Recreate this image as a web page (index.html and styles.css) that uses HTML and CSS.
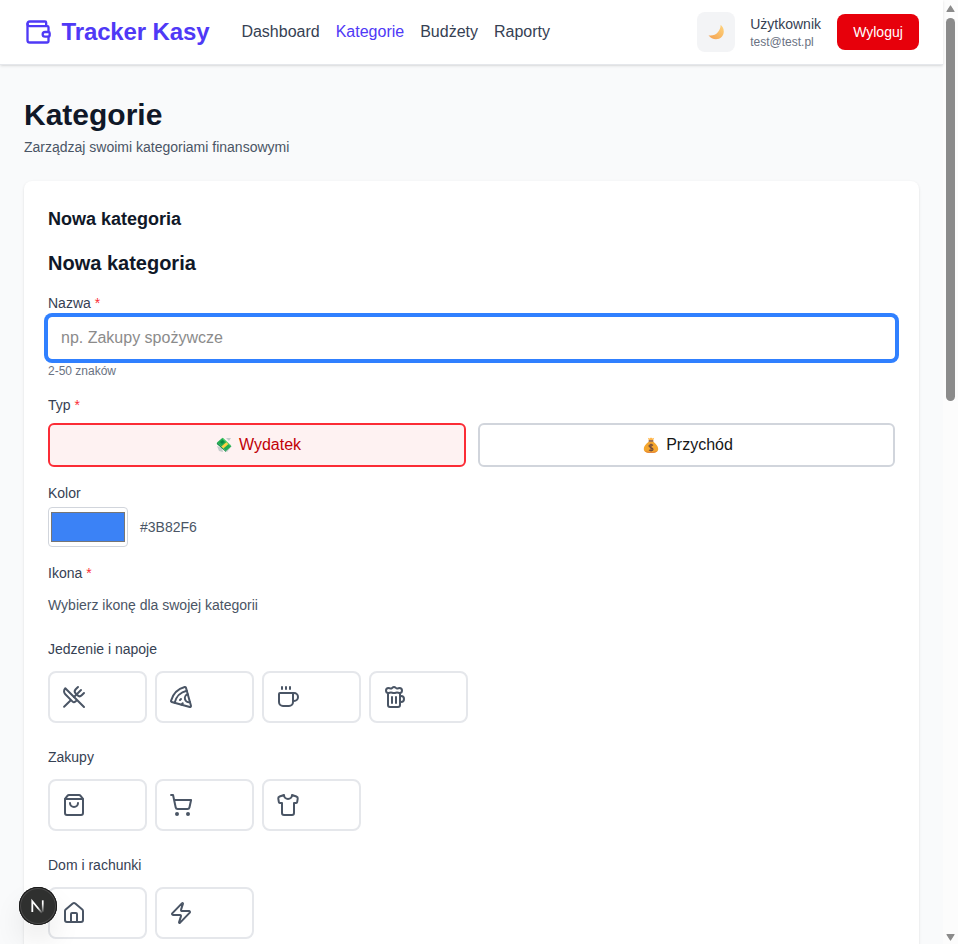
FILE: index.html
```html
<!DOCTYPE html>
<html lang="pl">
<head>
<meta charset="utf-8">
<title>Tracker Kasy</title>
<link rel="stylesheet" href="styles.css">
</head>
<body>
<div class="viewport">
  <div class="page">
    <header class="topbar">
      <div class="brand">
        <svg class="brand-icon" viewBox="0 0 24 24"><path d="M19 7V4a1 1 0 0 0-1-1H5a2 2 0 0 0 0 4h15a1 1 0 0 1 1 1v4h-3a2 2 0 0 0 0 4h3a1 1 0 0 0 1-1v-2a1 1 0 0 0-1-1"/><path d="M3 5v14a2 2 0 0 0 2 2h15a1 1 0 0 0 1-1v-4"/></svg>
        <span class="brand-name">Tracker Kasy</span>
      </div>
      <nav class="nav">
        <a>Dashboard</a><a class="active">Kategorie</a><a>Budżety</a><a>Raporty</a>
      </nav>
      <div class="account">
        <button class="theme" aria-label="Motyw">
          <svg viewBox="0 0 16 16" width="16" height="16"><defs><linearGradient id="moon" x1="1" y1="0" x2="0" y2="1"><stop offset="0" stop-color="#ffd47c"/><stop offset="1" stop-color="#f3a050"/></linearGradient></defs><path fill="url(#moon)" d="M12.6 0.8C16.500 3.900 16.800 9.600 13.600 13C10.200 16.400 3.700 15.900 0.500 11.300C4.300 12 7.700 10.700 9.800 8.200C11.600 6 12.800 3.600 12.600.8Z"/></svg>
        </button>
        <div class="user"><div class="user-name">Użytkownik</div><div class="user-mail">test@test.pl</div></div>
        <button class="logout">Wyloguj</button>
      </div>
    </header>
    <main class="main">
      <h1>Kategorie</h1>
      <p class="lead">Zarządzaj swoimi kategoriami finansowymi</p>
      <section class="card">
        <h2>Nowa kategoria</h2>
        <h3>Nowa kategoria</h3>
        <div class="field name-field">
          <label>Nazwa <i>*</i></label>
          <input class="text-input" type="text" placeholder="np. Zakupy spożywcze">
          <p class="hint">2-50 znaków</p>
        </div>
        <div class="field">
          <label>Typ <i>*</i></label>
          <div class="types">
            <button class="type expense">
              <svg viewBox="0 0 16 16" width="16" height="16"><path fill="#c5cbcb" d="M1 9l5 2 1 4-4-1zM10 1l5 0-2 3zM10 11l5-1-4 5-2-1z"/><path fill="#21ad50" d="M1 5.500 6.500.8 15.500 9.200 10 14Z"/><path fill="#098b42" d="m1 5.500 9 8.500v1L.8 7zM4 5l2.500-2 2 2-2.500 2z"/><path fill="#ffcf42" d="m5.300 9.500 5.500-4.700 2 1.900-5.400 4.800z"/><path fill="#60d579" d="m6.300 1.600.8-.6 7.600 7-.7.7z"/></svg>
              <span>Wydatek</span>
            </button>
            <button class="type income">
              <svg viewBox="0 0 16 16" width="16" height="16"><path fill="#ffb64b" d="m4.900.8 1.700.7L8 .4l1.500 1.100 1.700-.7-1.200 3H6z"/><path fill="#f4a62f" d="M6 4.200h4c1.600 2 5.200 4 5.200 7.800 0 3-2.200 3.800-7.200 3.800S.8 15 .8 12C.8 8.200 4.400 6.200 6 4.200Z"/><path fill="#df7634" d="M2 14c3 1.400 9 1.400 12 0-1 1.500-3 1.800-6 1.800S3 15.500 2 14Z"/><path fill="#875d50" d="M5.700 3.200h4.600v1.500H5.700z"/><path fill="none" stroke="#714b3e" stroke-width="1.200" d="M10 8.500C8.500 7.200 6 7.600 6 9.100s4 1.500 4 3.200-2.700 1.800-4 .6M8 6.800v7.700"/></svg>
              <span>Przychód</span>
            </button>
          </div>
        </div>
        <div class="field color-field">
          <label>Kolor</label>
          <div class="color-row"><div class="swatch"><div class="swatch-fill"></div></div><span>#3B82F6</span></div>
        </div>
        <div class="field icon-field">
          <label>Ikona <i>*</i></label>
          <p class="help">Wybierz ikonę dla swojej kategorii</p>
        </div>
        <div class="group">
          <h4>Jedzenie i napoje</h4>
          <div class="icons">
            <button class="tile"><svg viewBox="0 0 24 24"><path d="m16 2-2.300 2.300a3 3 0 0 0 0 4.200l1.800 1.800a3 3 0 0 0 4.200 0L22 8"/><path d="M15 15 3.300 3.300a4.200 4.200 0 0 0 0 6l7.300 7.300c.7.7 2 .7 2.800 0L15 15Zm0 0 7 7"/><path d="m2.100 21.800 6.400-6.300"/><path d="m19 5-7 7"/></svg></button>
            <button class="tile"><svg viewBox="0 0 24 24"><path d="m12 14-1 1"/><path d="m13.750 18.250-1.250 1.420"/><path d="M17.775 5.654a15.680 15.680 0 0 0-12.121 12.120"/><path d="M18.800 9.300a1 1 0 0 0 2.100 7.700"/><path d="M21.964 20.732a1 1 0 0 1-1.232 1.232l-18-5a1 1 0 0 1-.695-1.232A19.680 19.680 0 0 1 15.732 2.037a1 1 0 0 1 1.232.695z"/></svg></button>
            <button class="tile"><svg viewBox="0 0 24 24"><path d="M10 2v2"/><path d="M14 2v2"/><path d="M16 8a1 1 0 0 1 1 1v8a4 4 0 0 1-4 4H7a4 4 0 0 1-4-4V9a1 1 0 0 1 1-1h14a4 4 0 1 1 0 8h-1"/><path d="M6 2v2"/></svg></button>
            <button class="tile"><svg viewBox="0 0 24 24"><path d="M17 11h1a3 3 0 0 1 0 6h-1"/><path d="M9 12v6"/><path d="M13 12v6"/><path d="M14 7.500c-1 0-1.440.5-3 .5s-2-.5-3-.5-1.720.5-2.500.5a2.500 2.500 0 0 1 0-5c.78 0 1.570.5 2.500.5S9.440 2 11 2s2 1.500 3 1.500 1.720-.5 2.500-.5a2.500 2.500 0 0 1 0 5c-.78 0-1.500-.5-2.500-.5Z"/><path d="M5 8v12a2 2 0 0 0 2 2h8a2 2 0 0 0 2-2V8"/></svg></button>
          </div>
        </div>
        <div class="group">
          <h4>Zakupy</h4>
          <div class="icons">
            <button class="tile"><svg viewBox="0 0 24 24"><path d="M16 10a4 4 0 0 1-8 0"/><path d="M3.103 6.034h17.794"/><path d="M3.400 5.467a2 2 0 0 0-.4 1.200V20a2 2 0 0 0 2 2h14a2 2 0 0 0 2-2V6.667a2 2 0 0 0-.4-1.200l-2-2.667A2 2 0 0 0 17 2H7a2 2 0 0 0-1.600.8z"/></svg></button>
            <button class="tile"><svg viewBox="0 0 24 24"><circle cx="8" cy="21" r="1"/><circle cx="19" cy="21" r="1"/><path d="M2.050 2.050h2l2.660 12.420a2 2 0 0 0 2 1.580h9.780a2 2 0 0 0 1.950-1.570l1.650-7.430H5.120"/></svg></button>
            <button class="tile"><svg viewBox="0 0 24 24"><path d="M20.380 3.460 16 2a4 4 0 0 1-8 0L3.620 3.460a2 2 0 0 0-1.340 2.230l.58 3.470a1 1 0 0 0 .99.84H6v10c0 1.100.9 2 2 2h8a2 2 0 0 0 2-2V10h2.150a1 1 0 0 0 .99-.84l.58-3.470a2 2 0 0 0-1.340-2.230z"/></svg></button>
          </div>
        </div>
        <div class="group">
          <h4>Dom i rachunki</h4>
          <div class="icons">
            <button class="tile"><svg viewBox="0 0 24 24"><path d="M15 21v-8a1 1 0 0 0-1-1h-4a1 1 0 0 0-1 1v8"/><path d="M3 10a2 2 0 0 1 .709-1.528l7-6a2 2 0 0 1 2.582 0l7 6A2 2 0 0 1 21 10v9a2 2 0 0 1-2 2H5a2 2 0 0 1-2-2z"/></svg></button>
            <button class="tile"><svg viewBox="0 0 24 24"><path d="M4 14a1 1 0 0 1-.78-1.630l9.900-10.200a.5.5 0 0 1 .86.46l-1.920 6.020A1 1 0 0 0 13 10h7a1 1 0 0 1 .78 1.630l-9.900 10.200a.5.5 0 0 1-.86-.46l1.920-6.020A1 1 0 0 0 11 14z"/></svg></button>
          </div>
        </div>
      </section>
    </main>
  </div>
  <div class="scrollbar">
    <svg width="9" height="8" viewBox="0 0 9 8"><path d="M4.500 1 8 6.500H1Z"/></svg>
    <div class="thumb"></div>
    <svg class="down" width="9" height="8" viewBox="0 0 9 8"><path d="M4.500 7 8 1.500H1Z"/></svg>
  </div>
  <div class="dev-badge">
    <svg width="38" height="38" viewBox="0 0 38 38"><defs><linearGradient id="nd" gradientUnits="userSpaceOnUse" x1="18" y1="18" x2="24" y2="26"><stop offset=".3" stop-color="#fff"/><stop offset="1" stop-color="#fff" stop-opacity="0"/></linearGradient><linearGradient id="nv" x1="0" y1="0" x2="0" y2="1"><stop offset=".3" stop-color="#fff"/><stop offset="1" stop-color="#fff" stop-opacity=".2"/></linearGradient></defs><path d="M13.300 25V14.200L23 26" fill="none" stroke="url(#nd)" stroke-width="1.800"/><rect x="22.900" y="13.300" width="1.700" height="11.500" fill="url(#nv)"/></svg>
  </div>
</div>
</body>
</html>
```
FILE: styles.css
```css
* { box-sizing: border-box; }
body { margin: 0; font-family: "Liberation Sans", Arial, sans-serif; font-size: 16px; line-height: 24px; color: #171717; }
h1, h2, h3, h4, p { margin: 0; }
button { font: inherit; color: inherit; border: 0; padding: 0; background: none; }
.viewport { position: relative; display: flex; height: 944px; overflow: hidden; }
.page { flex: 1; background: #f9fafb; }
.topbar { position: relative; display: flex; align-items: center; height: 65px; padding: 0 24px; background: #fff; border-bottom: 1px solid #e5e7eb; box-shadow: 0 1px 3px rgba(0,0,0,.1), 0 1px 2px -1px rgba(0,0,0,.1); }
.brand { display: flex; align-items: center; gap: 9.5px; color: #4f39f6; }
.brand-icon { width: 28px; height: 28px; fill: none; stroke: currentColor; stroke-width: 2; stroke-linecap: round; stroke-linejoin: round; }
.brand-name { font-size: 24px; line-height: 32px; font-weight: 700; letter-spacing: -.13px; }
.nav { display: flex; gap: 16px; margin-left: 32px; color: #364153; }
.nav .active { color: #4f39f6; }
.account { display: flex; align-items: center; gap: 16px; margin-left: auto; }
.theme { display: flex; align-items: center; justify-content: center; width: 38px; height: 40px; margin-right: -.7px; border-radius: 8px; background: #f3f4f6; }
.user-name { font-size: 14px; line-height: 20px; color: #364153; }
.user-mail { font-size: 12px; line-height: 16px; color: #6a7282; }
.logout { width: 82px; height: 36px; border-radius: 8px; background: #e7000b; color: #fff; font-size: 14px; line-height: 20px; }
.main { padding: 32px 24px 0; }
h1 { font-size: 30px; line-height: 36px; color: #101828; }
.lead { margin-top: 4px; font-size: 14px; line-height: 20px; color: #4a5565; }
.card { margin-top: 24px; height: 900px; padding: 24px; border-radius: 8px; background: #fff; box-shadow: 0 1px 3px rgba(0,0,0,.1), 0 1px 2px -1px rgba(0,0,0,.1); }
h2 { font-size: 18px; line-height: 28px; color: #101828; }
h3 { margin-top: 16px; font-size: 20px; line-height: 28px; color: #101828; }
.field label { display: block; font-size: 14px; line-height: 20px; color: #364153; }
.field label i { font-style: normal; color: #fb2c36; }
.name-field { margin: 16px 0; }
.text-input { display: block; width: 100%; height: 42px; margin-top: 4px; padding: 0 12px; border: 1px solid #fff; border-radius: 4px; outline: 0; box-shadow: 0 0 0 4px #3080ff; font: inherit; background: #fff; }
.text-input::placeholder { color: #8b8b8b; opacity: 1; }
.hint { margin-top: 4px; font-size: 12px; line-height: 16px; color: #6a7282; }
.types { display: grid; grid-template-columns: 1fr 1fr; gap: 12px; margin-top: 8px; }
.type { display: flex; align-items: center; justify-content: center; gap: 7px; height: 44px; padding-left: 3.5px; border: 2px solid #d1d5dc; border-radius: 6px; }
.expense { border-color: #fb2c36; background: #fef2f2; color: #c10007; }
.color-field { margin: 16px 0; }
.color-row { display: flex; align-items: center; gap: 12px; margin-top: 4px; font-size: 14px; color: #4a5565; }
.swatch { width: 80px; height: 40px; padding: 4px 2px; border: 1px solid #d1d5dc; border-radius: 4px; }
.swatch-fill { height: 30px; border: 1px solid #767676; background: #3b82f6; }
.help { margin-top: 12px; font-size: 14px; line-height: 20px; color: #4a5565; }
.group { margin-top: 24px; }
h4 { font-size: 14px; line-height: 20px; font-weight: 400; color: #364153; }
.icons { display: grid; grid-template-columns: repeat(8, 1fr); gap: 8px; margin-top: 12px; }
.tile { display: flex; height: 52px; padding: 12px; border: 2px solid #e5e7eb; border-radius: 8px; color: #4a5565; }
.tile svg { width: 24px; height: 24px; fill: none; stroke: currentColor; stroke-width: 2; stroke-linecap: round; stroke-linejoin: round; }
.scrollbar { display: flex; flex-direction: column; align-items: center; width: 15px; padding: 5px 0 3px; background: #fcfcfc; fill: #8b8b8b; }
.scrollbar path { stroke: #8b8b8b; stroke-width: 1.2; stroke-linejoin: round; }
.thumb { width: 9px; height: 383px; margin-top: 5px; border-radius: 5px; background: #8b8b8b; }
.down { margin-top: auto; }
.dev-badge { position: absolute; left: 19px; top: 887px; width: 38px; height: 38px; border-radius: 50%; background: #2f302f; box-shadow: inset 0 0 0 1px #171717, inset 0 0 0 2px #4a4a4a, 0 16px 32px -8px rgba(0,0,0,.24); }
.dev-badge svg { display: block; }
```
